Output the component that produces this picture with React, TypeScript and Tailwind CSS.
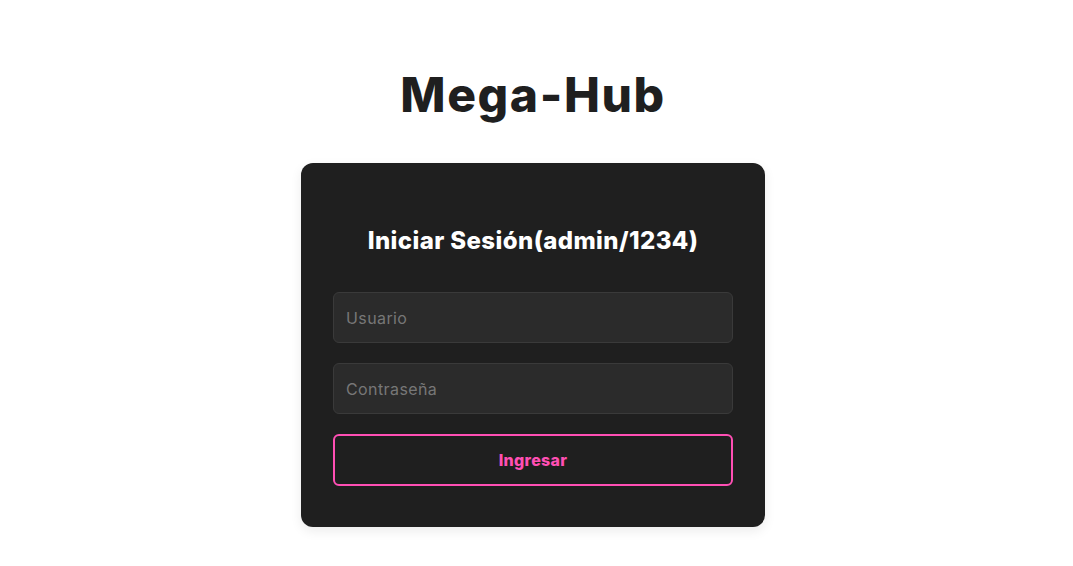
export default function App() {
  return (
    <div
      className="min-h-screen bg-white flex flex-col items-center pt-[71px] pr-[7px]"
      style={{ fontFamily: 'Inter, "Noto Sans", sans-serif' }}
    >
      <h1 className="text-[48px] leading-[48px] font-extrabold text-[#1f1f1f] mb-[44px] tracking-[1.6px]">
        Mega-Hub
      </h1>
      <div className="w-[464px] bg-[#1f1f1f] rounded-[12px] px-8 pt-[62px] pb-[41px] shadow-[0_4px_12px_rgba(0,0,0,0.08)]">
        <h2 className="text-[24px] leading-[32px] font-extrabold text-white text-center mb-[35px] tracking-[0.4px]">
          Iniciar Sesión(admin/1234)
        </h2>
        <form className="flex flex-col gap-5" onSubmit={(e) => e.preventDefault()}>
          <input
            type="text"
            placeholder="Usuario"
            className="h-[51px] w-full rounded-md bg-[#2b2b2b] border border-[#3a3a3a] px-3 text-[16px] tracking-[0.4px] text-white placeholder:text-[#777777] outline-none"
          />
          <input
            type="password"
            placeholder="Contraseña"
            className="h-[51px] w-full rounded-md bg-[#2b2b2b] border border-[#3a3a3a] px-3 text-[16px] tracking-[0.4px] text-white placeholder:text-[#777777] outline-none"
          />
          <button
            type="submit"
            className="h-[52px] w-full rounded-md border-2 border-[#ff4fb4] bg-transparent text-[#ff4fb4] text-[16px] font-extrabold tracking-[0.3px]"
          >
            Ingresar
          </button>
        </form>
      </div>
    </div>
  )
}
